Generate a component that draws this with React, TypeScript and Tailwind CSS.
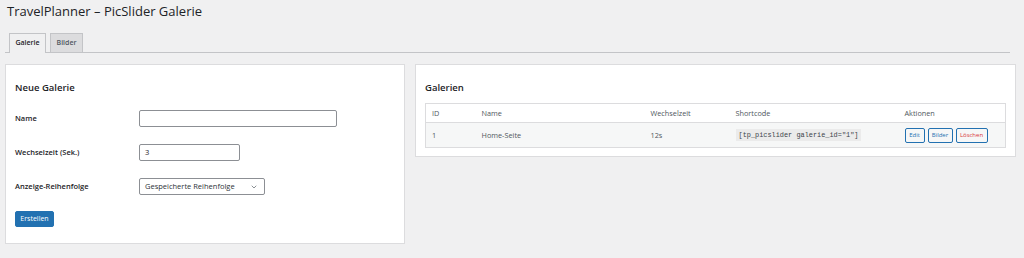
import { ChevronDown } from "lucide-react";

const rows = [
  { id: "1", name: "Home-Seite", interval: "12s", shortcode: '[tp_picslider galerie_id="1"]' },
];

export default function App() {
  return (
    <div
      className="min-h-[258px] bg-[#f0f0f1] px-[5px] text-[#1d2327]"
      style={{ fontFamily: '"Open Sans", "Noto Sans", Arial, sans-serif' }}
    >
      {/* Title */}
      <h1 className="pl-[2px] pt-[2px] text-[13px] leading-[18px] font-normal">
        TravelPlanner – PicSlider Galerie
      </h1>

      {/* Tabs */}
      <div className="mr-[9px] mt-[13px] flex items-end gap-[4px] border-b border-[#c3c4c7] pl-[4px]">
        <div className="-mb-px flex h-[20px] w-[37px] items-center justify-center border border-b-0 border-[#c3c4c7] bg-[#f0f0f1] text-[7px] font-semibold text-[#1d2327]">
          Galerie
        </div>
        <div className="flex h-[19px] w-[33px] items-center justify-center border border-b-0 border-[#c3c4c7] bg-[#dcdcde] text-[7px] font-semibold text-[#50575e]">
          Bilder
        </div>
      </div>

      {/* Cards */}
      <div className="mt-[11px] flex items-start gap-[10px]">
        {/* Neue Galerie */}
        <div className="h-[180px] w-[400px] border border-[#dcdcde] bg-white pl-[9px] pt-[17px]">
          <h2 className="text-[9.5px] leading-[12px] font-semibold">Neue Galerie</h2>

          <div className="mt-[16px] flex items-center">
            <label className="w-[124px] text-[7.5px] font-semibold">Name</label>
            <div className="h-[17px] w-[198px] rounded-[2px] border border-[#8c8f94] bg-white" />
          </div>

          <div className="mt-[17px] flex items-center">
            <label className="w-[124px] text-[7.5px] font-semibold">Wechselzeit (Sek.)</label>
            <div className="flex h-[17px] w-[101px] items-center rounded-[2px] border border-[#8c8f94] bg-white pl-[5px] text-[7.5px]">
              3
            </div>
          </div>

          <div className="mt-[17px] flex items-center">
            <label className="w-[124px] text-[7.5px] font-semibold">Anzeige-Reihenfolge</label>
            <div className="flex h-[17px] w-[126px] items-center justify-between rounded-[2px] border border-[#8c8f94] bg-white pl-[5px] pr-[6px] text-[7.5px] text-[#2c3338]">
              <span>Gespeicherte Reihenfolge</span>
              <ChevronDown className="h-[8px] w-[8px] text-[#50575e]" strokeWidth={2} />
            </div>
          </div>

          <button className="mt-[16px] flex h-[16px] w-[39px] items-center justify-center rounded-[2px] border border-[#2271b1] bg-[#2271b1] text-[7px] text-white">
            Erstellen
          </button>
        </div>

        {/* Galerien */}
        <div className="w-[601px] border border-[#dcdcde] bg-white px-[9px] pb-[8px] pt-[17px]">
          <h2 className="text-[9.5px] leading-[12px] font-semibold">Galerien</h2>

          <table className="mt-[9px] w-full table-fixed border-collapse border border-[#dcdcde] text-[7.3px] text-[#50575e]">
            <colgroup>
              <col className="w-[50px]" />
              <col className="w-[169px]" />
              <col className="w-[85px]" />
              <col className="w-[169px]" />
              <col />
            </colgroup>
            <thead>
              <tr className="h-[19px] border-b border-[#dcdcde] bg-white text-left">
                <th className="pl-[6px] font-normal text-[#50575e]">ID</th>
                <th className="pl-[6px] font-normal text-[#50575e]">Name</th>
                <th className="pl-[6px] font-normal text-[#50575e]">Wechselzeit</th>
                <th className="pl-[6px] font-normal text-[#50575e]">Shortcode</th>
                <th className="pl-[6px] font-normal text-[#50575e]">Aktionen</th>
              </tr>
            </thead>
            <tbody>
              {rows.map((r) => (
                <tr key={r.id} className="h-[25px] bg-[#f6f7f7]">
                  <td className="pl-[6px] text-[#50575e]">{r.id}</td>
                  <td className="pl-[6px] text-[#50575e]">{r.name}</td>
                  <td className="pl-[6px] text-[#50575e]">{r.interval}</td>
                  <td className="pl-[6px]">
                    <code
                      className="inline-block bg-[#ebebeb] px-[3px] py-[2px] text-[6.9px] leading-[8px] text-[#3c434a]"
                      style={{ fontFamily: '"Liberation Mono", "DejaVu Sans Mono", monospace' }}
                    >
                      {r.shortcode}
                    </code>
                  </td>
                  <td className="pl-[6px]">
                    <div className="flex gap-[3px]">
                      <button className="h-[15px] w-[20px] rounded-[2px] border border-[#2271b1] bg-[#f6f7f7] text-[6px] text-[#2271b1]">
                        Edit
                      </button>
                      <button className="h-[15px] w-[25px] rounded-[2px] border border-[#2271b1] bg-[#f6f7f7] text-[6px] text-[#2271b1]">
                        Bilder
                      </button>
                      <button className="h-[15px] w-[32px] rounded-[2px] border border-[#2271b1] bg-[#f6f7f7] text-[6px] text-[#d63638]">
                        Löschen
                      </button>
                    </div>
                  </td>
                </tr>
              ))}
            </tbody>
          </table>
        </div>
      </div>
    </div>
  );
}
